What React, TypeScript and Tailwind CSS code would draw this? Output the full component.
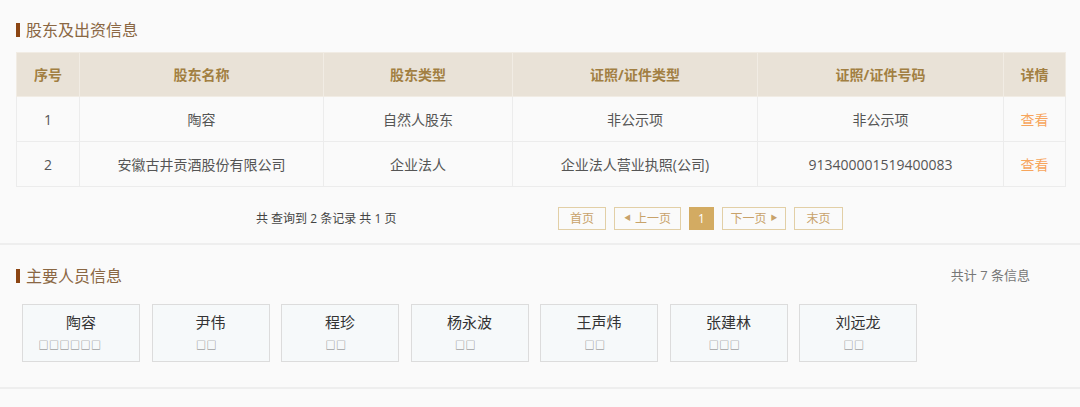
const cols = [
  { label: "序号", w: "w-[63px]" },
  { label: "股东名称", w: "w-[244px]" },
  { label: "股东类型", w: "w-[189px]" },
  { label: "证照/证件类型", w: "w-[245px]" },
  { label: "证照/证件号码", w: "w-[246px]" },
  { label: "详情", w: "w-[62px]" },
]

const rows = [
  ["1", "陶容", "自然人股东", "非公示项", "非公示项"],
  ["2", "安徽古井贡酒股份有限公司", "企业法人", "企业法人营业执照(公司)", "913400001519400083"],
]

const people = [
  { name: "陶容", role: "□□□□□□", shift: "pr-[22px]" },
  { name: "尹伟", role: "□□", shift: "pr-[8px]" },
  { name: "程珍", role: "□□", shift: "pr-[8px]" },
  { name: "杨永波", role: "□□", shift: "pr-[8px]" },
  { name: "王声炜", role: "□□", shift: "pr-[8px]" },
  { name: "张建林", role: "□□□", shift: "pr-[8px]" },
  { name: "刘远龙", role: "□□", shift: "pr-[8px]" },
]

function SectionTitle({ children }: { children: React.ReactNode }) {
  return (
    <div className="flex items-center h-5">
      <span className="w-1 h-[14px] bg-[#8b4513] mr-[6px]"></span>
      <span className="text-[16px] text-[#8a6743] leading-5">{children}</span>
    </div>
  )
}

function PageBtn({ children, className = "" }: { children: React.ReactNode; className?: string }) {
  return (
    <div className={`h-[23px] flex items-center justify-center border border-[#e2cfa6] text-[12px] text-[#c8a26a] ${className}`}>
      {children}
    </div>
  )
}

export default function App() {
  return (
    <div
      className="w-[1080px] h-[407px] bg-[#fafafa] overflow-hidden"
      style={{ fontFamily: '"Open Sans", "Noto Sans CJK SC", sans-serif' }}
    >
      {/* 股东及出资信息 */}
      <div className="pt-5 px-4 border-b-2 border-[#eeeeee] h-[245px]">
        <SectionTitle>股东及出资信息</SectionTitle>
        <table className="mt-3 border-collapse w-[1049px] text-[14px] table-fixed">
          <thead>
            <tr className="bg-[#e9e2d7] h-[44px]">
              {cols.map((c) => (
                <th key={c.label} className={`${c.w} border border-[#f1ece4] font-bold text-[#a27f42]`}>
                  {c.label}
                </th>
              ))}
            </tr>
          </thead>
          <tbody>
            {rows.map((r) => (
              <tr key={r[0]} className="h-[45px] bg-[#fafafa]">
                {r.map((cell, i) => (
                  <td key={i} className="border border-[#ececec] text-center text-[#555555]">
                    {cell}
                  </td>
                ))}
                <td className="border border-[#ececec] text-center text-[#f7a55c]">查看</td>
              </tr>
            ))}
          </tbody>
        </table>
        <div className="flex items-center mt-5">
          <div className="w-[542px] pl-[240px] text-[12px] text-[#444444]">共 查询到 2 条记录 共 1 页</div>
          <div className="flex items-center gap-2">
            <PageBtn className="w-[48px]">首页</PageBtn>
            <PageBtn className="w-[67px]">
              <span className="text-[7px] mr-1">◀</span>上一页
            </PageBtn>
            <div className="h-[23px] w-[25px] flex items-center justify-center bg-[#d3ab62] text-white text-[12px]">1</div>
            <PageBtn className="w-[64px]">
              下一页<span className="text-[7px] ml-1">▶</span>
            </PageBtn>
            <PageBtn className="w-[49px]">末页</PageBtn>
          </div>
        </div>
      </div>

      {/* 主要人员信息 */}
      <div className="pt-[21px] px-4 border-b-2 border-[#eeeeee] h-[144px]">
        <div className="flex items-center justify-between">
          <SectionTitle>主要人员信息</SectionTitle>
          <span className="text-[13px] text-[#777777] mr-[34px]">共计 7 条信息</span>
        </div>
        <div className="flex gap-[11.5px] mt-[18px] ml-[6px]">
          {people.map((p) => (
            <div
              key={p.name}
              className="w-[118px] h-[58px] border border-[#dcdcdc] bg-[#f6f9fa] flex flex-col items-center pt-[6px]"
            >
              <span className="text-[15px] text-[#333333] leading-[22px]">{p.name}</span>
              <span className={`text-[10px] text-[#777777] leading-[16px] tracking-[0.5px] mt-[4px] ${p.shift}`}>{p.role}</span>
            </div>
          ))}
        </div>
      </div>
    </div>
  )
}
